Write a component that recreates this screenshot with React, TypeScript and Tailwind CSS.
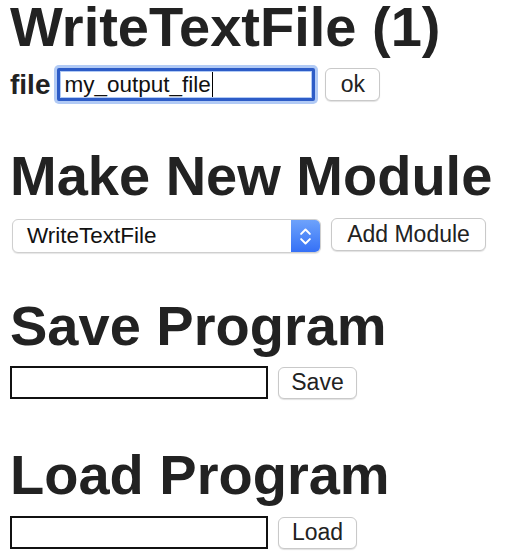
import { ChevronsUpDown } from "lucide-react";

const btnCls =
  "h-[32px] rounded-[6px] border border-[#c9c9c9] bg-white text-[23px] text-[#222] shadow-[0_1px_1px_rgba(0,0,0,0.12)] flex items-center justify-center";

const h1Cls = "text-[56px] font-bold leading-[64px]";

const App = () => {
  return (
    <div className="min-h-screen bg-white px-[10px] pt-px font-['Liberation_Sans',Arial,sans-serif] text-[#222]">
      {/* WriteTextFile module */}
      <section className="-mt-[6px]">
        <h1 className={h1Cls}>WriteTextFile (1)</h1>
        <div className="mt-[9px] flex items-center gap-[10px]">
          <div className="flex items-center gap-[7px]">
            <label className="text-[28px] font-bold leading-none">file</label>
            <div
              role="textbox"
              className="flex h-[33px] w-[258px] items-center rounded-[2px] border-[3px] border-[#2d5cc7] bg-white pl-[4px] text-[22.5px] text-[#111] shadow-[0_0_0_3px_#b1caf5,inset_0_0_0_1px_#b1caf5]"
            >
              <span>my_output_file</span>
              <span className="ml-[1px] h-[25px] w-[1.5px] bg-black" />
            </div>
          </div>
          <button className={`${btnCls} h-[33px] w-[55px]`}>ok</button>
        </div>
      </section>

      {/* Make New Module */}
      <section className="mt-[43px]">
        <h1 className={h1Cls}>Make New Module</h1>
        <div className="mt-[10px] flex items-start gap-[10px]">
          <div className="ml-[2px] mt-[1px] flex h-[34px] w-[309px] overflow-hidden rounded-[6px] border border-[#cfcfcf] bg-white shadow-[0_1px_1px_rgba(0,0,0,0.1)]">
            <div className="flex flex-1 items-center pl-[14px] text-[22.5px] text-[#111]">WriteTextFile</div>
            <div className="flex w-[29px] items-center justify-center bg-gradient-to-b from-[#6ea2fb] to-[#3570f6]">
              <ChevronsUpDown className="h-[21px] w-[21px] text-white" strokeWidth={2.25} />
            </div>
          </div>
          <button className={`${btnCls} h-[33px] w-[155px]`}>Add Module</button>
        </div>
      </section>

      {/* Save Program */}
      <section className="mt-[41px]">
        <h1 className={h1Cls}>Save Program</h1>
        <div className="mt-[8px] flex items-center gap-[10px]">
          <input className="h-[33px] w-[258px] border-2 border-[#111] bg-white px-1 text-[22px] outline-none" />
          <button className={`${btnCls} w-[79px]`}>Save</button>
        </div>
      </section>

      {/* Load Program */}
      <section className="mt-[44px]">
        <h1 className={h1Cls}>Load Program</h1>
        <div className="mt-[9px] flex items-center gap-[10px]">
          <input className="h-[33px] w-[258px] border-2 border-[#111] bg-white px-1 text-[22px] outline-none" />
          <button className={`${btnCls} w-[79px]`}>Load</button>
        </div>
      </section>
    </div>
  );
};

export default App;
